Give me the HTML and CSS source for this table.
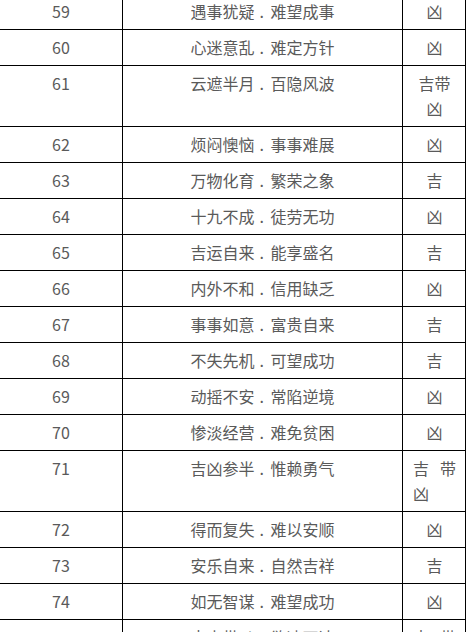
FILE: index.html
```html
<!DOCTYPE html>
<html lang="zh-CN">
<head>
<meta charset="utf-8">
<title>数理表</title>
<link rel="stylesheet" href="styles.css">
</head>
<body>
<div class="sheet">
  <div class="row"><div class="c num">59</div><div class="c desc">遇事犹疑<span class="dot">.</span>难望成事</div><div class="c luck">凶</div></div>
  <div class="row"><div class="c num">60</div><div class="c desc">心迷意乱<span class="dot">.</span>难定方针</div><div class="c luck">凶</div></div>
  <div class="row"><div class="c num">61</div><div class="c desc">云遮半月<span class="dot">.</span>百隐风波</div><div class="c luck">吉带凶</div></div>
  <div class="row"><div class="c num">62</div><div class="c desc">烦闷懊恼<span class="dot">.</span>事事难展</div><div class="c luck">凶</div></div>
  <div class="row"><div class="c num">63</div><div class="c desc">万物化育<span class="dot">.</span>繁荣之象</div><div class="c luck">吉</div></div>
  <div class="row"><div class="c num">64</div><div class="c desc">十九不成<span class="dot">.</span>徒劳无功</div><div class="c luck">凶</div></div>
  <div class="row"><div class="c num">65</div><div class="c desc">吉运自来<span class="dot">.</span>能享盛名</div><div class="c luck">吉</div></div>
  <div class="row"><div class="c num">66</div><div class="c desc">内外不和<span class="dot">.</span>信用缺乏</div><div class="c luck">凶</div></div>
  <div class="row"><div class="c num">67</div><div class="c desc">事事如意<span class="dot">.</span>富贵自来</div><div class="c luck">吉</div></div>
  <div class="row"><div class="c num">68</div><div class="c desc">不失先机<span class="dot">.</span>可望成功</div><div class="c luck">吉</div></div>
  <div class="row"><div class="c num">69</div><div class="c desc">动摇不安<span class="dot">.</span>常陷逆境</div><div class="c luck">凶</div></div>
  <div class="row"><div class="c num">70</div><div class="c desc">惨淡经营<span class="dot">.</span>难免贫困</div><div class="c luck">凶</div></div>
  <div class="row"><div class="c num">71</div><div class="c desc">吉凶参半<span class="dot">.</span>惟赖勇气</div><div class="c luck justify">吉 带 凶</div></div>
  <div class="row"><div class="c num">72</div><div class="c desc">得而复失<span class="dot">.</span>难以安顺</div><div class="c luck">凶</div></div>
  <div class="row"><div class="c num">73</div><div class="c desc">安乐自来<span class="dot">.</span>自然吉祥</div><div class="c luck">吉</div></div>
  <div class="row"><div class="c num">74</div><div class="c desc">如无智谋<span class="dot">.</span>难望成功</div><div class="c luck">凶</div></div>
  <div class="row"><div class="c num">75</div><div class="c desc">吉中带凶<span class="dot">.</span>欲速不达</div><div class="c luck justify">吉 带 凶</div></div>
</div>
</body>
</html>
```

FILE: styles.css
```css
html, body {
  margin: 0;
  padding: 0;
  background: #ffffff;
  overflow: hidden;
}

body {
  font-family: "Noto Sans CJK SC", "Noto Sans", sans-serif;
  font-size: 16px;
  color: #5a5a5a;
}

.sheet {
  margin-top: -6px;
  width: 466px;
  display: grid;
  grid-template-columns: 123px 280px 63px;
}

.row {
  display: contents;
}

.c {
  box-sizing: border-box;
  border-right: 1px solid #000000;
  border-bottom: 1px solid #000000;
  padding: 5px 9px;
  line-height: 25px;
  text-align: center;
}

.dot {
  display: inline-block;
  box-sizing: border-box;
  width: 16px;
  padding-left: 5px;
  text-align: left;
}

.luck {
  padding: 5px 9px 5px 10px;
}

.justify {
  text-align: justify;
  text-align-last: left;
}
```
